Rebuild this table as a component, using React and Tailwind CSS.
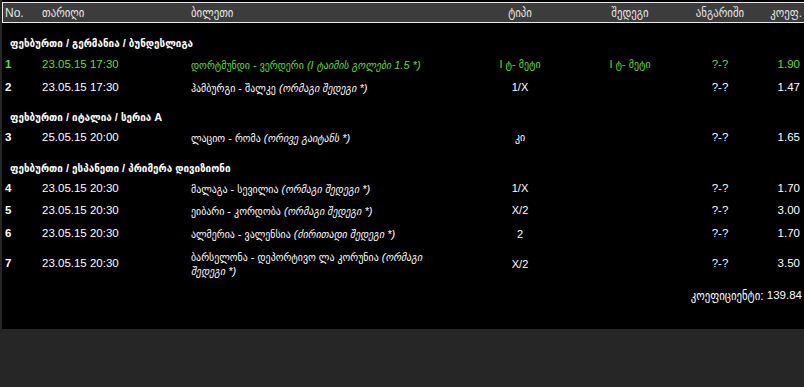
import React from "react";

const FONT = { fontFamily: '"Liberation Sans", "DejaVu Sans Condensed", "DejaVu Sans", sans-serif' };

const sections = [
  {
    title: "ფეხბურთი / გერმანია / ბუნდესლიგა",
    rows: [
      { n: "1", d: "23.05.15 17:30", m: "დორტმუნდი - ვერდერი", i: "(I ტაიმის გოლები 1.5 *)", t: "I ტ- მეტი", r: "I ტ- მეტი", a: "?-?", c: "1.90", green: true, h: "h-[23px]" },
      { n: "2", d: "23.05.15 17:30", m: "ჰამბურგი - შალკე", i: "(ორმაგი შედეგი *)", t: "1/X", r: "", a: "?-?", c: "1.47", h: "h-[23px]" },
    ],
  },
  {
    title: "ფეხბურთი / იტალია / სერია A",
    mt: "mt-[8px]",
    rows: [
      { n: "3", d: "25.05.15 20:00", m: "ლაციო - რომა", i: "(ორივე გაიტანს *)", t: "კი", r: "", a: "?-?", c: "1.65", h: "h-[21px]" },
    ],
  },
  {
    title: "ფეხბურთი / ესპანეთი / პრიმერა დივიზიონი",
    mt: "mt-[10px]",
    rows: [
      { n: "4", d: "23.05.15 20:30", m: "მალაგა - სევილია", i: "(ორმაგი შედეგი *)", t: "1/X", r: "", a: "?-?", c: "1.70", h: "h-[21px]" },
      { n: "5", d: "23.05.15 20:30", m: "ეიბარი - კორდობა", i: "(ორმაგი შედეგი *)", t: "X/2", r: "", a: "?-?", c: "3.00", h: "h-[23px]" },
      { n: "6", d: "23.05.15 20:30", m: "ალმერია - ვალენსია", i: "(ძირითადი შედეგი *)", t: "2", r: "", a: "?-?", c: "1.70", h: "h-[24px]" },
      { n: "7", d: "23.05.15 20:30", m: "ბარსელონა - დეპორტივო ლა კორუნია", i: "(ორმაგი", i2: "შედეგი *)", t: "X/2", r: "", a: "?-?", c: "3.50", h: "h-[36px]" },
    ],
  },
];

function Row({ row }) {
  const color = row.green ? "text-[#5fdc3c]" : "text-white";
  return (
    <div className={`flex items-center ${row.h} ${color} text-[11.5px]`}>
      <div className="w-[40px] pl-[3px] font-bold">{row.n}</div>
      <div className="w-[149px]">{row.d}</div>
      <div className="w-[279px] text-[11px] leading-[14px]">
        {row.m}{" "}
        <span className="italic">{row.i}</span>
        {row.i2 && (
          <>
            <br />
            <span className="italic">{row.i2}</span>
          </>
        )}
      </div>
      <div className="w-[100px] text-center text-[11px]">{row.t}</div>
      <div className="w-[120px] text-center text-[11px]">{row.r}</div>
      <div className="w-[60px] text-center">{row.a}</div>
      <div className="w-[52px] text-right pr-[2px]">{row.c}</div>
    </div>
  );
}

export default function App() {
  return (
    <div className="w-[804px] h-[387px] bg-[#262626] overflow-hidden" style={FONT}>
      <div className="ml-[2px] w-[802px] h-[329px] bg-black pt-[2px]">
        <div className="flex items-center h-[21px] bg-[#3c3c3c] border-t border-l border-b border-[#e8e8e8] text-[#e6e6e6] text-[12px]">
          <div className="w-[39px] pl-[2px]">No.</div>
          <div className="w-[149px]">თარიღი</div>
          <div className="w-[279px]">ბილეთი</div>
          <div className="w-[100px] text-center">ტიპი</div>
          <div className="w-[120px] text-center">შედეგი</div>
          <div className="w-[60px] text-center">ანგარიში</div>
          <div className="w-[54px] text-right pr-[2px]">კოეფ.</div>
        </div>
        <div className="mt-[10px]">
          {sections.map((s, idx) => (
            <div key={idx} className={s.mt || ""}>
              <div className="h-[20px] flex items-center pl-[8px] text-white font-bold text-[11px]">{s.title}</div>
              {s.rows.map((r) => (
                <Row key={r.n} row={r} />
              ))}
            </div>
          ))}
          <div className="mt-[4px] h-[20px] flex items-center justify-end pr-[2px] text-white text-[11.5px]">
            <span className="text-[12px]">კოეფიციენტი:</span>
            <span>&nbsp;139.84</span>
          </div>
        </div>
      </div>
    </div>
  );
}
